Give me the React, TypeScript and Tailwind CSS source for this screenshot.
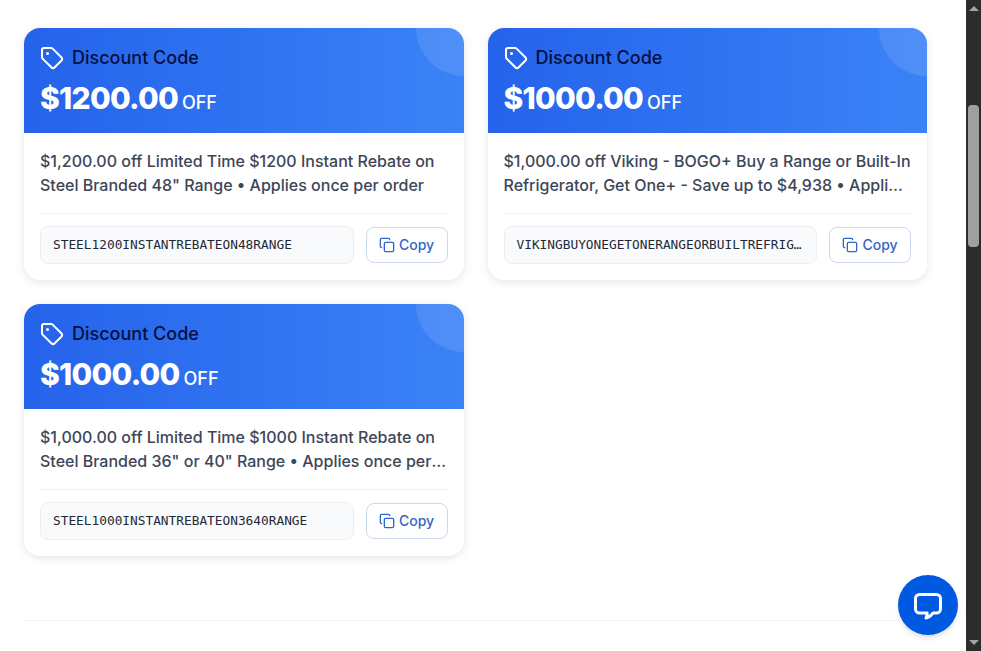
import React from "react";
import { Copy, Tag } from "lucide-react";

interface CouponProps {
  amount: string;
  description: string;
  code: string;
}

const coupons: CouponProps[] = [
  {
    amount: "$1200.00",
    description:
      '$1,200.00 off Limited Time $1200 Instant Rebate on Steel Branded 48" Range • Applies once per order',
    code: "STEEL1200INSTANTREBATEON48RANGE",
  },
  {
    amount: "$1000.00",
    description:
      "$1,000.00 off Viking - BOGO+ Buy a Range or Built-In Refrigerator, Get One+ - Save up to $4,938 • Applies once per order",
    code: "VIKINGBUYONEGETONERANGEORBUILTREFRIGERATORGETONE",
  },
  {
    amount: "$1000.00",
    description:
      '$1,000.00 off Limited Time $1000 Instant Rebate on Steel Branded 36" or 40" Range • Applies once per order',
    code: "STEEL1000INSTANTREBATEON3640RANGE",
  },
];

const CouponCard: React.FC<CouponProps> = ({ amount, description, code }) => (
  <div className="overflow-hidden rounded-2xl bg-white shadow-[0_2px_10px_rgba(0,0,0,0.1)]">
    {/* Header */}
    <div className="relative overflow-hidden bg-gradient-to-r from-[#2563eb] to-[#3b82f6] p-4">
      <div className="absolute -right-12 -top-12 h-24 w-24 rounded-full bg-white/10" />
      <div className="flex h-7 items-center gap-2">
        <Tag className="h-6 w-6 text-white" strokeWidth={2} />
        <span className="text-lg font-medium leading-7 text-[#04103f]">Discount Code</span>
      </div>
      <div className="mt-2 flex items-baseline gap-1 text-white">
        <span className="text-3xl font-extrabold leading-9 tracking-tight">{amount}</span>
        <span className="text-lg font-medium leading-7">OFF</span>
      </div>
    </div>

    {/* Body */}
    <div className="p-4">
      <p className="mb-4 line-clamp-2 text-base font-medium leading-6 text-[#3d4657]">{description}</p>
      <div className="flex items-center gap-3 border-t border-[#eef1f5] pt-3">
        <div className="h-[38px] min-w-0 flex-1 truncate rounded-lg border border-[#eceef1] bg-[#f9fafb] px-3 font-['DejaVu_Sans_Mono',monospace] text-[12.8px] leading-[36px] text-[#1f2937]">
          {code}
        </div>
        <button className="flex h-9 w-[82px] shrink-0 items-center justify-center gap-1 rounded-lg border border-[#ccd8ee] bg-white text-sm font-medium text-[#3366cc]">
          <Copy className="h-4 w-4" strokeWidth={2} />
          Copy
        </button>
      </div>
    </div>
  </div>
);

const Scrollbar = () => (
  <div className="flex h-full w-[15px] shrink-0 flex-col items-center bg-[#2c2c2c]">
    <div className="mt-[6px] h-0 w-0 border-x-[5px] border-b-[5px] border-x-transparent border-b-[#a3a3a3]" />
    <div className="mt-[94px] h-[142px] w-[11px] rounded-sm bg-[#9f9f9f]" />
    <div className="mt-auto mb-[6px] h-0 w-0 border-x-[5px] border-t-[5px] border-x-transparent border-t-[#a3a3a3]" />
  </div>
);

export default function App() {
  return (
    <div className="relative flex h-[651px] overflow-hidden bg-white font-['Inter',sans-serif]">
      <main className="min-w-0 flex-1 pl-6 pr-[39px] pt-7">
        <div className="grid grid-cols-2 gap-6">
          {coupons.map((coupon) => (
            <CouponCard key={coupon.code} {...coupon} />
          ))}
        </div>
        <div className="mt-16 border-t border-[#eef1f5]" />
      </main>
      <Scrollbar />

      {/* Chat widget */}
      <button className="absolute left-[898px] top-[575px] flex h-[60px] w-[60px] items-center justify-center rounded-full bg-[#0059e1] shadow-md">
        <svg width="30" height="30" viewBox="0 0 30 30" fill="none">
          <path
            d="M6.5 4.5h17a4 4 0 0 1 4 4v10.5a4 4 0 0 1-4 4H20c-1.5 2.5-3.8 4-7 5 1-1.5 1.3-3 1.2-5H6.5a4 4 0 0 1-4-4V8.5a4 4 0 0 1 4-4Z"
            stroke="white"
            strokeWidth="3"
            strokeLinejoin="round"
          />
        </svg>
      </button>
    </div>
  );
}
